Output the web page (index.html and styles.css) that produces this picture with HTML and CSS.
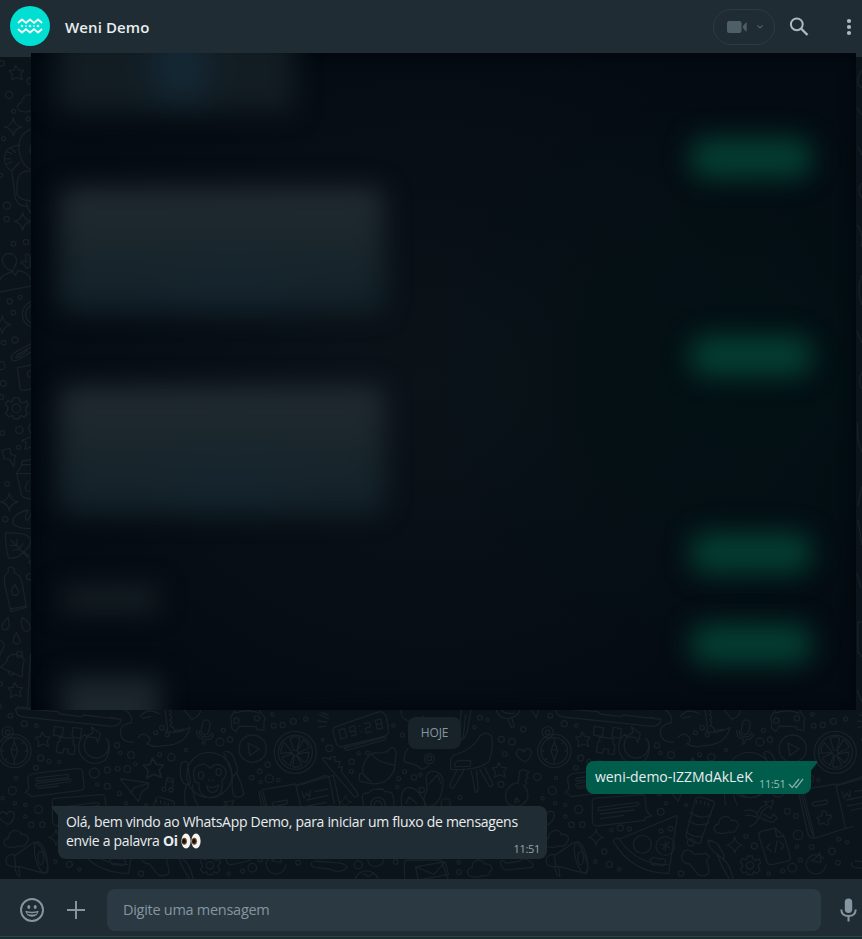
FILE: index.html
```html
<!DOCTYPE html>
<html lang="pt-BR">
<head>
<meta charset="utf-8">
<title>Weni Demo</title>
<link rel="stylesheet" href="styles.css">
</head>
<body>
<div class="app">
  <header class="header">
    <svg class="avatar" viewBox="0 0 40 40" aria-hidden="true">
      <circle cx="20" cy="20" r="20" fill="#00dfd2"/>
      <g fill="none" stroke="#fff" stroke-width="1.9" stroke-linejoin="round" stroke-linecap="round">
        <path d="M8.500 16.500l3.500-3 4 3.400 4-3.400 4 3.400 4-3.400 3.500 3"/>
        <path d="M8.500 23.500l3.500 3 4-3.400 4 3.400 4-3.400 4 3.400 3.500-3"/>
      </g>
      <path d="M12 18.500l1.500 1.500-1.500 1.500-1.500-1.500zM20 18.500l1.500 1.500-1.500 1.500-1.500-1.500zM28 18.500l1.500 1.500-1.500 1.500-1.500-1.500zM16 19l1 1-1 1-1-1zM24 19l1 1-1 1-1-1z" fill="#fff"/>
    </svg>
    <h1 class="title">Weni Demo</h1>
    <div class="call">
      <svg width="21" height="14" viewBox="0 0 21 14" aria-hidden="true"><rect x="0" y="1" width="14.500" height="12" rx="2.200" fill="#4f5f68"/><path d="M15.500 7L18.300 3Q19.700 1.800 19.700 3.500V10.500Q19.700 12.200 18.300 11z" fill="#4f5f68"/></svg>
      <svg width="8" height="6" viewBox="0 0 8 6" aria-hidden="true"><path d="M1.500 1.500L4 4l2.500-2.500" fill="none" stroke="#4f5f68" stroke-width="1.200"/></svg>
    </div>
    <svg class="search" viewBox="0 0 20 20" aria-hidden="true"><circle cx="7.800" cy="7.300" r="5.900" fill="none" stroke="#aebac1" stroke-width="2"/><path d="M12 11.500l6.500 6.500" stroke="#aebac1" stroke-width="2.400"/></svg>
    <svg class="more" viewBox="0 0 6 18" aria-hidden="true"><g fill="#aebac1"><circle cx="3" cy="3" r="2.100"/><circle cx="3" cy="9" r="2.100"/><circle cx="3" cy="15" r="2.100"/></g></svg>
  </header>

  <main class="chat">
    <svg class="doodles" viewBox="0 57 862 822" aria-hidden="true">
      <defs>
        <path id="star" d="M-2-22L7-8 22-7 13 5 18 21 1 14-14 22-12 5-22-6-7-8z"/>
        <path id="spark" d="M0-27Q3-4 26 0 3 4 0 27-3 4-26 0-3-4 0-27z"/>
        <path id="heart" d="M4 22Q-25 8-23-6C-21-20-6-20-1-8 5-24 23-20 22-5Q20 10 4 22z"/>
        <path id="cloud" d="M-30 24C-44 14-36-2-24-2-24-28 8-32 14-12 30-18 44 2 30 10 26 28 12 22 4 22-4 30-18 26-30 24z"/>
        <path id="gear" d="M-7-28H7L9-19 18-14 27-20 32-8 25-2V6L30 14 21 24 12 19 7 28H-7L-10 19-20 23-29 13-23 5V-4L-30-10-22-21-12-16z"/>
        <g id="compass"><circle r="50"/><circle r="40"/><circle cx="-20" cy="-56" r="17"/><circle cx="-20" cy="-56" r="7"/><path d="M0-28L10 0 0 28-10 0zM-10 0Q0-8 10 0M0-40v8M0 40v-8M-40 0h8M40 0h-8M28-28l-5 5M-28 28l5-5"/></g>
        <g id="dots">
          <circle cx="31" cy="47" r="7"/><circle cx="73" cy="71" r="9"/><circle cx="109" cy="77" r="5"/><circle cx="122" cy="174" r="9"/><circle cx="147" cy="184" r="6"/><circle cx="178" cy="186" r="5"/><circle cx="108" cy="203" r="7"/><circle cx="48" cy="234" r="5"/><circle cx="37" cy="272" r="12"/><circle cx="8" cy="295" r="5"/><circle cx="45" cy="310" r="5"/><circle cx="76" cy="315" r="5"/><circle cx="116" cy="328" r="12"/><circle cx="76" cy="350" r="5"/><circle cx="94" cy="374" r="8"/><circle cx="127" cy="374" r="8"/>
          <circle cx="351" cy="136" r="8"/><circle cx="361" cy="159" r="5"/><circle cx="393" cy="165" r="10"/><circle cx="406" cy="192" r="5"/><circle cx="382" cy="207" r="10"/><circle cx="353" cy="206" r="7"/><circle cx="322" cy="210" r="9"/><circle cx="283" cy="219" r="15"/><circle cx="292" cy="253" r="5"/><circle cx="322" cy="259" r="9"/><circle cx="358" cy="281" r="6"/><circle cx="479" cy="164" r="6"/><circle cx="514" cy="172" r="11"/><circle cx="558" cy="150" r="5"/><circle cx="467" cy="98" r="6"/><circle cx="486" cy="83" r="7"/><circle cx="502" cy="104" r="6"/><circle cx="660" cy="126" r="12"/><circle cx="690" cy="119" r="8"/><circle cx="670" cy="91" r="6"/><circle cx="821" cy="77" r="7"/><circle cx="848" cy="75" r="8"/><circle cx="817" cy="43" r="5"/><circle cx="803" cy="194" r="8"/><circle cx="779" cy="214" r="7"/><circle cx="755" cy="233" r="7"/><circle cx="782" cy="246" r="5"/><circle cx="808" cy="236" r="12"/><circle cx="835" cy="240" r="5"/>
          <circle cx="880" cy="64" r="9"/><circle cx="917" cy="57" r="6"/><circle cx="968" cy="119" r="4"/><circle cx="988" cy="145" r="10"/><circle cx="1076" cy="160" r="5"/><circle cx="1103" cy="159" r="6"/><circle cx="1054" cy="214" r="6"/><circle cx="1055" cy="185" r="8"/><circle cx="1180" cy="76" r="5"/><circle cx="1207" cy="105" r="6"/><circle cx="1214" cy="215" r="6"/><circle cx="1242" cy="232" r="8"/><circle cx="1261" cy="224" r="5"/><circle cx="1196" cy="236" r="6"/><circle cx="1192" cy="261" r="5"/><circle cx="1265" cy="270" r="8"/><circle cx="1337" cy="310" r="14"/><circle cx="1380" cy="292" r="6"/><circle cx="1440" cy="53" r="7"/><circle cx="1462" cy="60" r="5"/><circle cx="1504" cy="118" r="9"/><circle cx="1536" cy="125" r="10"/><circle cx="1514" cy="162" r="7"/><circle cx="1570" cy="88" r="8"/><circle cx="1423" cy="82" r="5"/><circle cx="1503" cy="253" r="9"/><circle cx="1612" cy="231" r="11"/>
          <circle cx="362" cy="335" r="10"/><circle cx="378" cy="310" r="5"/><circle cx="438" cy="315" r="4"/><circle cx="215" cy="391" r="5"/><circle cx="241" cy="384" r="9"/><circle cx="268" cy="387" r="6"/><circle cx="363" cy="393" r="6"/><circle cx="392" cy="386" r="7"/><circle cx="423" cy="521" r="8"/><circle cx="193" cy="455" r="8"/><circle cx="208" cy="493" r="9"/><circle cx="166" cy="485" r="5"/><circle cx="238" cy="508" r="5"/><circle cx="618" cy="409" r="6"/><circle cx="643" cy="438" r="9"/><circle cx="742" cy="334" r="9"/><circle cx="767" cy="348" r="7"/><circle cx="774" cy="405" r="14"/><circle cx="815" cy="441" r="7"/><circle cx="771" cy="440" r="5"/><circle cx="781" cy="480" r="6"/><circle cx="757" cy="503" r="13"/><circle cx="728" cy="513" r="6"/><circle cx="686" cy="521" r="5"/><circle cx="896" cy="418" r="6"/><circle cx="922" cy="427" r="5"/><circle cx="876" cy="454" r="10"/><circle cx="894" cy="488" r="7"/><circle cx="1075" cy="495" r="12"/><circle cx="1187" cy="486" r="7"/><circle cx="1376" cy="488" r="5"/><circle cx="1377" cy="516" r="7"/>
        </g>
        <g id="tile">
          <use href="#dots"/><use href="#compass" x="43" y="153"/>
          <use href="#star" x="128" y="118"/><use href="#star" transform="translate(460 204) scale(1.350)"/><use href="#star" x="1498" y="210"/>
          <path d="M47 25L50 40Q53 49 72 51L335 79Q361 77 363 58L250 45 246 50 180 42 174 35 50 25M330 52L363 58"/>
          <path d="M163 79l28 5-5 26-26-5zM219 82l26 4-4 29-25-5zM178 111l43 5-2 16 6 4-3 28-18-3 2-13-15-2-3 13-19-3 4-30 7-2z"/>
          <path d="M319 115A37 37 0 1 1 262 112L255 103A47 47 0 1 0 315 180Q334 155 325 123L318 117M274 80l27 21-8 27-5-15-29-3 20-13z"/>
          <path d="M367 25Q401 42 395 68 360 73 361 100 365 127 400 127M414 113Q430 92 448 112 454 126 440 131 462 145 490 137M421 50Q442 21 480 42M427 55l25-6M495 28L503 87 498 94Q530 103 570 82 558 135 490 137M507 31q12 3 1 13 14 5 1 16 12 7 1 18 12 3 14 15 12-8 14-1 12-8 13-1"/>
          <path d="M548 25L576 58Q604 47 601 28"/>
          <rect x="606" y="60" width="23" height="44" rx="11" transform="rotate(12 618 80)"/><path d="M590 91Q588 115 610 117L607 132Q615 134 617 119 639 119 640 101M598 93q-1 15 13 17 18 4 24-11"/>
          <path d="M695 85V66Q688 54 698 42L710 25H775L788 45Q799 52 792 64V91L770 88 768 80 718 78 708 94zM706 39q40-14 72 1"/><circle cx="709" cy="62" r="8"/><circle cx="771" cy="55" r="8"/>
          <circle cx="758" cy="146" r="41"/><path d="M744 129L778 147 749 167z"/>
          <g transform="translate(886 157)"><circle r="63"/><circle r="51"/><path d="M-5-6L-16-42Q0-52 13-42L5-6zM6-5L24-38Q40-27 41-13L7 2zM8 5L41-1Q41 20 28 31L4 9zM3 9L20 38Q5 48-8 43L-2 9zM-5 9L-16 39Q-35 30-39 15L-8 3zM-9 0L-43 3Q-44-17-33-29z"/></g>
          <path d="M104 220L235 205Q248 206 248 218L252 260Q252 270 242 271L95 290Q85 280 75 277 88 270 86 260L83 236Q82 225 104 220zM110 234L202 223Q210 228 202 233L112 243Q103 240 110 234M112 250L210 237Q216 240 210 245L111 260Q102 255 112 250M112 266L175 258"/>
          <path d="M360 236L445 249Q447 257 442 264L426 275 415 304zM445 250L403 263 390 281"/>
          <path d="M496 262L501 232 521 238 517 265M500 242L520 247"/><circle cx="492" cy="268" r="6"/><circle cx="513" cy="270" r="6"/>
          <circle cx="628" cy="225" r="68"/><path d="M586 247Q570 201 602 194 619 188 630 206 646 185 668 199 690 215 666 242 672 290 636 293 594 292 597 249zM620 258Q638 268 656 255 653 278 638 277 624 278 620 258M627 240l2 3M638 239l2 3"/><ellipse cx="603" cy="226" rx="8" ry="11"/><ellipse cx="656" cy="216" rx="8" ry="11"/>
          <path d="M563 186Q538 176 541 217 542 254 565 255 576 250 567 225zM559 255Q549 290 557 316M577 255Q581 299 593 316M676 155Q696 150 708 190 720 219 698 229 690 200 671 158M698 229Q692 272 704 289 720 296 732 282 725 250 709 216"/>
          <path d="M157 310Q153 297 164 295L304 284Q316 284 315 296L320 334 334 348 316 353 315 361 171 378Q158 376 157 363zM178 322L292 307Q301 310 294 317L178 332Q170 327 178 322M181 342L283 330M182 356L250 346"/>
          <path d="M462 313L468 295Q475 288 484 292L519 303Q527 310 520 319L480 430Q461 429 447 418 435 411 439 401zM450 337q37 25 64 6M446 362q30 22 61 6M439 396q22 19 49 12"/><path d="M470 309v-8M482 311v-9M494 314v-9M505 318v-9"/><circle cx="453" cy="427" r="11"/>
          <path d="M220 424Q225 410 238 417L412 346 386 520Q276 520 220 424zM238 417Q288 494 384 494"/><circle cx="307" cy="433" r="27"/><circle cx="376" cy="438" r="28"/><path d="M376 424v27M362 432l28 12M388 427l-20 20M330 480Q341 466 355 477 374 472 378 486 371 503 353 493 332 500 330 480"/>
          <use href="#cloud" x="560" y="374"/><use href="#cloud" x="50" y="416"/>
          <path d="M612 333Q635 323 652 342 660 319 682 314L672 304Q688 307 701 300L693 327 687 318Q665 329 658 352 646 375 627 380M652 342L651 352Q634 344 617 347M670 342Q687 353 694 354L701 341 712 355 699 367 690 365Q673 361 663 353"/>
          <path d="M777 283Q779 271 792 268L887 252 917 385 823 415Q810 415 804 403zM783 280L811 385 823 415M789 275L822 405M892 257L1000 226 1025 340M917 385L940 379M820 307L860 300Q868 307 858 312L824 319Q812 314 820 307"/><path d="M847 335Q851 327 858 335L860 346 871 345Q878 350 871 355L864 361 865 372Q857 377 852 369L841 373Q832 369 838 361L831 354Q833 346 844 349z"/>
          <path d="M887 257L975 227Q985 226 989 240L1003 312M906 275l6 20 8-16 9 12 2-20M944 275l40-8M920 300l65-14M923 318l55-11M935 331l60-14"/>
          <use href="#heart" x="21" y="352"/><use href="#heart" x="1572" y="164"/>
          <path d="M968 178Q962 174 974 172L993 180 988 174 1006 169 1003 185 1020 184 1016 202 1027 200 1024 214 1074 281Q1074 294 1062 289z"/>
          <path d="M1001 101Q995 85 1008 80L1135 36Q1155 33 1160 55L1166 92Q1166 106 1151 109L1021 141Q1007 139 1001 101zM1017 90l17-5 6 27-17 5zM1066 92l-15 4-4-14 16-5 6 27-15 4M1079 77v1M1083 95v1M1093 71l16-4 3 13-16 5 3 14 16-4M1126 61l16-4 6 27-16 5zM1129 74l16-4M1032 144L1144 115Q1160 106 1157 119L1040 151z"/>
          <path d="M958 44l28 12M953 63l28 3M955 82l23-4M965 38l20 7"/>
          <path d="M1088 222Q1078 214 1078 231 1075 247 1091 245 1119 258 1151 246 1190 223 1186 180L1189 155Q1180 137 1170 145 1166 160 1120 159 1086 176 1088 222M1115 160Q1126 185 1182 195M1090 222Q1104 240 1115 246"/>
          <path d="M1224 146Q1210 161 1213 186 1255 193 1263 207 1276 208 1285 196"/><circle cx="1288" cy="176" r="15"/><circle cx="1288" cy="175" r="7"/><path d="M1203 25Q1200 61 1231 62 1250 66 1270 48"/>
          <path d="M1397 45L1390 109Q1390 125 1374 119L1385 25M1413 25L1402 94Q1391 126 1383 114"/>
          <path d="M1353 208Q1347 165 1367 164 1418 148 1440 108 1455 91 1475 108 1482 149 1466 185 1433 213 1353 208M1364 200Q1362 184 1380 181L1413 183 1410 199zM1370 211l-21 44q5 15 13 6l29-49M1414 213l12 64q10 0 8-14l-4-52M1440 208l29 52q11 1 8-12l-23-45"/>
          <path d="M1488 25Q1491 52 1520 56 1553 55 1563 25M1500 25Q1514 44 1543 40M1522 55l12 27 9-2-8-27M1597 35l12 18 8-28"/>
          <path d="M1559 213Q1570 205 1588 216L1579 225 1585 234 1576 241 1580 250 1571 257Q1587 270 1583 296 1563 330 1528 314 1509 297 1521 269 1538 246 1554 250zM1548 293l10 10-13 5z"/>
          <path d="M1087 290Q1087 278 1105 279L1118 268 1147 267 1156 275Q1176 274 1179 286L1184 330H1092z"/><circle cx="1134" cy="314" r="22"/><circle cx="1134" cy="314" r="11"/>
          <path d="M1205 320Q1199 267 1224 263 1255 258 1280 320M1217 310l10-19 23 19M1276 320Q1266 293 1282 269 1270 213 1297 214 1337 215 1327 266 1318 323 1276 320M1286 253l27-29 10 27"/>
          <use href="#spark" transform="translate(1036 306) scale(.72)"/><use href="#spark" transform="translate(168 412) scale(.9)"/><use href="#spark" transform="translate(584 435) scale(.92)"/>
          <path d="M20 472Q33 458 45 466L103 426Q122 430 135 470 151 509 139 521L106 513 60 500 45 500Q12 501 20 472M43 464L47 500M45 500q3 30 15 29l-4-27"/><ellipse cx="123" cy="472" rx="17" ry="48" transform="rotate(-14 123 472)"/><ellipse cx="122" cy="474" rx="8" ry="20"/>
          <path d="M430 455Q449 442 461 463L498 460Q516 471 499 483 509 506 506 521 489 533 473 523L449 492Q414 489 430 455M503 420Q538 426 541 448 557 463 549 478 570 489 580 540M530 461Q508 449 503 420M530 461L549 478M530 461Q552 513 570 540"/>
          <path d="M656 405Q655 396 665 394L705 384 733 410 752 476Q751 482 740 484L695 494Q684 495 681 486zM705 384L710 410 733 410M690 431l-10 12 14 10M705 457l6-34M719 425l13 10-8 13"/>
          <use href="#gear" x="630" y="496"/><circle cx="630" cy="496" r="11"/>
          <path d="M851 475A29 29 0 1 0 857 494M840 458l3 30-28-6 12-8z"/>
          <path d="M936 487Q930 499 945 503L990 507Q1021 524 1042 501 1031 488 1005 488L945 483M1065 540A36 36 0 0 1 1135 540M1090 520l14 10 18-10M1103 480Q1106 501 1130 499 1153 493 1149 480M1214 540L1213 490Q1213 481 1224 480H1323L1345 540M1247 501L1335 485 1346 523 1255 540zM1247 501L1302 523 1335 485"/>
          <use href="#cloud" x="1440" y="505"/><path d="M1500 485Q1511 477 1517 490L1560 483Q1577 468 1588 485 1604 487 1596 502L1521 510Q1508 512 1500 485"/>
        </g>
      </defs>
      <g class="ink" transform="translate(0 700) scale(.33333)"><use href="#tile"/><use href="#tile" x="1620"/></g>
      <g class="ink" transform="translate(0 50) scale(.33333)">
        <use href="#star" x="49" y="68"/><circle cx="5" cy="40" r="8"/><circle cx="91" cy="93" r="10"/><circle cx="27" cy="135" r="11"/><circle cx="41" cy="184" r="6"/><circle cx="84" cy="207" r="6"/><circle cx="11" cy="266" r="6"/><use href="#cloud" x="90" y="159"/><use href="#spark" x="40" y="231"/>
        <path d="M95 236Q45 257 60 316 69 349 95 360M60 286Q17 286 13 322 13 354 35 362L59 337M18 304l18 7M31 292l15 15M14 326h18M18 343l19-8M35 362L46 445Q55 470 80 468M95 364Q57 357 52 395L50 428Q53 451 93 453M80 458Q82 482 98 493M95 280q-10 20 0 36"/>
        <circle cx="21" cy="467" r="11"/><circle cx="20" cy="507" r="8"/><circle cx="2" cy="376" r="6"/><use href="#spark" x="68" y="514"/><circle cx="78" cy="576" r="8"/><circle cx="40" cy="581" r="7"/>
        <path d="M37 664Q4 650 7 625 16 606 36 612 54 622 48 641L37 664 47 676 53 662Q89 665 99 707L0 726M37 664L30 668Q3 676 0 690M62 638Q68 630 79 636L76 615Q84 606 90 622L91 650 78 655 74 645z"/>
        <circle cx="29" cy="754" r="8"/><circle cx="60" cy="742" r="6"/><circle cx="40" cy="788" r="7"/><circle cx="108" cy="793" r="41"/><circle cx="108" cy="793" r="31"/><use href="#spark" x="7" y="824"/><circle cx="45" cy="870" r="9"/><circle cx="11" cy="878" r="7"/>
        <path d="M95 880L48 905Q28 919 36 929 44 937 59 926L96 904M95 890L52 914Q42 924 52 923L83 901M96 945L52 953 61 1018Q65 1025 95 1016"/><circle cx="3" cy="947" r="12"/><circle cx="10" cy="1000" r="9"/><circle cx="92" cy="972" r="10"/>
      </g>
      <g class="ink" transform="translate(0 380) scale(.33333)">
        <use href="#gear" transform="translate(49 85) scale(1.120)"/><circle cx="49" cy="85" r="13"/><circle cx="58" cy="150" r="11"/><circle cx="7" cy="159" r="7"/><circle cx="56" cy="202" r="6"/><circle cx="4" cy="51" r="7"/>
        <path d="M95 130L84 142 94 165M95 170L64 182 79 187 75 208 96 199M6 211L30 205 33 223 46 227 41 260 29 238 12 236zM64 253L67 243 96 238M50 280L67 254H96M50 281H96M50 281L65 346Q70 356 96 357M85 303Q66 332 88 335M83 390Q36 401 39 430 48 446 94 446M84 390Q71 416 80 421 90 420 96 389"/>
        <circle cx="22" cy="311" r="7"/><use href="#spark" x="28" y="366"/><circle cx="16" cy="418" r="8"/><circle cx="88" cy="590" r="9"/>
        <path d="M16 459Q88 456 92 480 94 501 68 517 61 534 26 535 16 501 16 459M33 480L68 517 86 535M50 497L51 477M57 508L69 491M46 497L30 496M58 508L39 511M70 514l17 15M97 538l-12 8 11 10"/>
        <path d="M25 576L24 565Q35 557 43 567L42 578Q61 585 66 605L79 682 33 695 13 608Q12 581 25 576M30 687l45-8M44 613Q28 634 40 645 55 650 56 634zM25 712Q0 735 7 747 23 755 28 735zM67 712Q90 728 91 744 82 764 70 748 60 729 67 712M50 758Q36 779 41 788 55 798 61 783zM0 781Q17 790 11 801L0 824M52 824Q22 819 20 845L2 862 66 891 69 854Q80 830 52 824M25 874q2 14 14 10 5 0 1-6"/>
        <circle cx="58" cy="823" r="9"/><use href="#star" x="46" y="930"/><circle cx="1" cy="911" r="6"/><path d="M92 821L82 980M46 990l8-10 38 5M0 970l5 15"/>
      </g>
      <path class="edge" d="M862 70q-5 6-4 15l4 3M857 108l5 7M858 147l4 8M862 183q-6 8 0 15M857 225q7 8 4 22M862 275q-6 16 0 30M857 331l5 12M862 372q-5 9 0 17M858 423q-2 18 4 29M862 486l-4 20M858 520l4 25M857 573l4 15M862 622h-4v30l4 5M857 690l5 12"/>
    </svg>

    <section class="history" aria-hidden="true">
      <div class="blur b-first"></div>
      <div class="blur sent s1"></div>
      <div class="blur card c1"></div>
      <div class="blur sent s2"></div>
      <div class="blur card c2"></div>
      <div class="blur sent s3"></div>
      <div class="blur small"></div>
      <div class="blur sent s4"></div>
      <div class="blur last"></div>
    </section>

    <div class="day">HOJE</div>

    <div class="bubble out">
      <svg class="tail-out" viewBox="0 0 8 12" aria-hidden="true"><path d="M0 0H6Q8 0 7 2L0 11z" fill="#005c4b"/></svg>
      <span class="code">weni-demo-IZZMdAkLeK</span>
      <span class="time">11:51</span>
      <svg class="ticks" viewBox="0 0 16 11" aria-hidden="true"><path d="M1 6l3.200 3.500L11 1M7 8.400l1.300 1.200L15 1" fill="none" stroke="#80aea5" stroke-width="1.300"/></svg>
    </div>

    <div class="bubble in">
      <svg class="tail-in" viewBox="0 0 8 12" aria-hidden="true"><path d="M8 0H2Q0 0 1 2L8 11z" fill="#202c33"/></svg>
      <p class="line">Olá, bem vindo ao WhatsApp Demo, para iniciar um fluxo de mensagens</p>
      <p class="line">envie a palavra <b>Oi</b> <svg class="eyes" viewBox="0 0 20 16" role="img" aria-label="olhos"><ellipse cx="5" cy="8" rx="4.600" ry="7.500" fill="#f4f4f4"/><ellipse cx="15" cy="8" rx="4.600" ry="7.500" fill="#f4f4f4"/><ellipse cx="3.300" cy="8.300" rx="2.600" ry="3.500" fill="#70461d"/><ellipse cx="13.300" cy="8.300" rx="2.600" ry="3.500" fill="#70461d"/><ellipse cx="3" cy="8.300" rx="1.700" ry="2.300" fill="#15100e"/><ellipse cx="13" cy="8.300" rx="1.700" ry="2.300" fill="#15100e"/></svg></p>
      <span class="time time-in">11:51</span>
    </div>
  </main>

  <footer class="composer">
    <svg class="smile" viewBox="0 0 24 24" aria-hidden="true"><circle cx="12" cy="12" r="11" fill="none" stroke="#8696a0" stroke-width="1.900"/><ellipse cx="8.800" cy="9" rx="1.500" ry="2" fill="#8696a0"/><ellipse cx="15.200" cy="9" rx="1.500" ry="2" fill="#8696a0"/><path d="M5.300 12.800Q12 14.600 18.700 12.800 17.500 18.700 12 18.700T5.300 12.800z" fill="#8696a0"/><path d="M7 14.500Q12 15.800 17 14.500L16.300 16Q12 17 7.700 16z" fill="#202c33"/></svg>
    <svg class="plus" viewBox="0 0 18 18" aria-hidden="true"><path d="M9 0v18M0 9h18" stroke="#8696a0" stroke-width="2"/></svg>
    <div class="field"><span>Digite uma mensagem</span></div>
    <svg class="mic" viewBox="0 0 17 24" aria-hidden="true"><rect x="4.800" y=".500" width="7.400" height="14.500" rx="3.700" fill="#8696a0"/><path d="M1.300 11.500Q1.500 18 8.500 18t7.200-6.500M8.500 18v5.500" fill="none" stroke="#8696a0" stroke-width="2"/></svg>
  </footer>
</div>
</body>
</html>
```
FILE: styles.css
```css
* { box-sizing: border-box; }
body {
  margin: 0;
  overflow: hidden;
  background: #0b141a;
  color: #e9edef;
  font-family: "Open Sans", "Noto Sans", sans-serif;
}
.app { display: flex; flex-direction: column; width: 862px; height: 939px; }
svg { display: block; flex: none; }

.header { display: flex; align-items: center; height: 57px; padding: 0 0 4px 10px; background: #202c33; }
.avatar { width: 40px; height: 40px; margin-top: -1px; }
.title { margin: 1px 0 0 15px; font-size: 15px; line-height: 22px; font-weight: 600; letter-spacing: .1px; }
.call {
  display: flex; align-items: center; gap: 8px;
  width: 62px; height: 36px; margin-left: auto; padding-left: 13px;
  border: 1px solid #2f3b43; border-radius: 18px;
}
.search { width: 20px; height: 20px; margin: 1px 0 0 14px; }
.more { width: 6px; height: 18px; margin: 1px 10px 0 37px; }

.chat { position: relative; display: flex; flex-direction: column; height: 822px; background: #0b141a; }
.doodles { position: absolute; inset: 0; width: 862px; height: 822px; }
.ink { fill: none; stroke: #182127; stroke-width: 4; stroke-linecap: round; stroke-linejoin: round; }
.edge { fill: none; stroke: #182127; stroke-width: 1.3; }

.history {
  position: relative;
  display: flex; flex-direction: column; flex: none;
  width: 825px; height: 657px; margin: -4px 0 0 31px; padding: 0 45px 0 28px;
  overflow: hidden;
  background:
    radial-gradient(ellipse 330px 330px at 720px 320px, rgba(2, 17, 20, .9), transparent),
    radial-gradient(ellipse 430px 380px at 400px 330px, #0b1319, transparent),
    #040b12;
  box-shadow: inset 0 0 14px 2px #02070d;
}
.blur { flex: none; filter: blur(13px); }
.b-first { width: 238px; height: 80px; margin: -21px 0 0 -2px; background: radial-gradient(ellipse 45px 70px at 124px 30px, #142c3a, transparent), #121c23; }
.sent { align-self: flex-end; width: 120px; height: 40px; border-radius: 14px; background: #043e32; }
.s1 { margin-top: 26px; }
.card { width: 325px; border-radius: 12px; background: radial-gradient(ellipse 100px 60px at 170px 100px, rgba(21, 38, 48, .6), transparent), linear-gradient(#212b30, #1a262c 45%, #122029); }
.c1 { height: 125px; margin-top: 9px; }
.s2 { margin-top: 24px; }
.c2 { height: 128px; margin-top: 10px; }
.s3 { margin-top: 19px; }
.small { width: 96px; height: 26px; margin: 13px 0 0 3px; background: #151f23; }
.s4 { margin-top: 12px; }
.last { width: 98px; height: 60px; margin: 13px 0 0 3px; background: #1c262d; }

.day {
  position: relative; align-self: center;
  width: 53px; height: 32px; margin: 7px 0 0 7px;
  border-radius: 8px; background: #182229; color: #8696a0;
  font-size: 12px; line-height: 32px; text-align: center; letter-spacing: -.2px;
}
.bubble { position: relative; border-radius: 8px; font-size: 14px; line-height: 19px; }
.out { display: flex; align-self: flex-end; width: 225px; height: 33px; margin: 12px 51px 0 0; padding: 6px 7px 0 9px; background: #005c4b; border-top-right-radius: 0; }
.in { width: 489px; height: 53px; margin: 12px 0 0 58px; padding: 6px 8px 0; background: #202c33; border-top-left-radius: 0; }
.tail-out { position: absolute; top: 0; right: -7px; width: 8px; height: 12px; }
.tail-in { position: absolute; top: 0; left: -7px; width: 8px; height: 12px; }
.code { width: 164px; white-space: nowrap; letter-spacing: -.05px; }
.time { margin-top: 9px; font-size: 11px; line-height: 15px; color: #99beb7; letter-spacing: -.3px; }
.ticks { width: 16px; height: 11px; margin: 11px 0 0 auto; }
.line { margin: 0; white-space: nowrap; letter-spacing: -.3px; }
.eyes { display: inline-block; width: 20px; height: 16px; vertical-align: -3px; }
.time-in { position: absolute; right: 7px; bottom: 3px; margin: 0; color: #9ba4a9; }

.composer { display: flex; align-items: center; height: 60px; padding: 0 5px 0 20px; background: #202c33; border-bottom: 2px solid #17302f; box-shadow: inset 0 -1px #344047; }
.smile { width: 24px; height: 24px; margin-top: 4px; }
.plus { width: 18px; height: 18px; margin: 4px 0 0 23px; }
.field { width: 714px; height: 42px; margin: 4px 0 0 22px; padding-left: 16px; border-radius: 8px; background: #2a3942; color: #8696a0; font-size: 14.5px; line-height: 42px; white-space: nowrap; letter-spacing: -.28px; }
.mic { width: 17px; height: 24px; margin: 4px 0 0 19px; }
```
